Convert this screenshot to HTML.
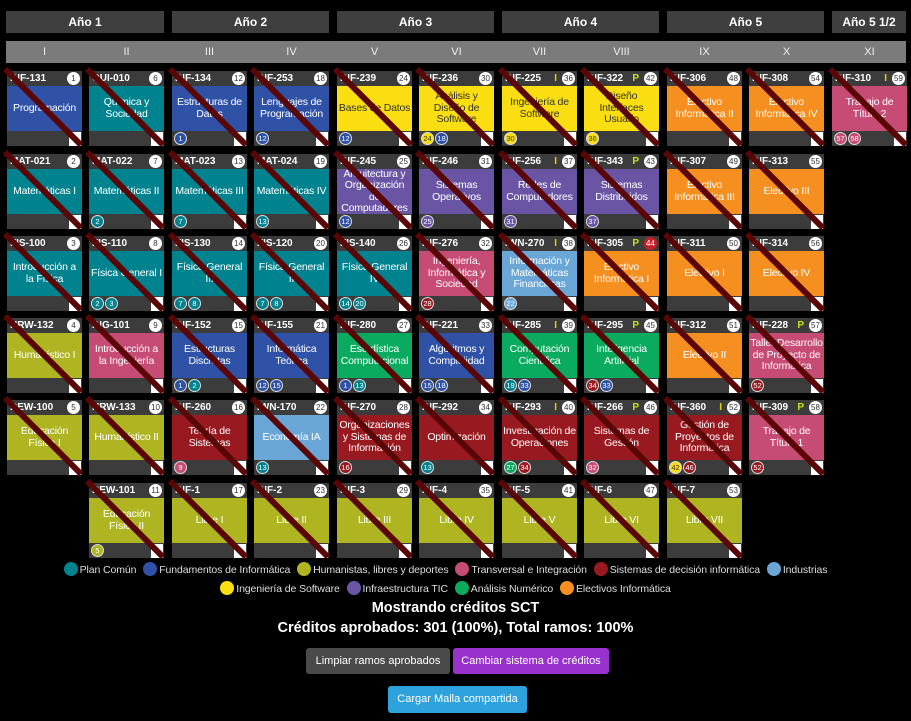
<!DOCTYPE html>
<html><head><meta charset="utf-8">
<style>
*{box-sizing:border-box;margin:0;padding:0}
body{width:911px;height:721px;background:#000;font-family:"Liberation Sans",sans-serif;color:#fff;position:relative;overflow:hidden}
.y{position:absolute;top:11px;height:22px;background:#3f3f3f;font-weight:bold;font-size:12px;line-height:22px;text-align:center}
.s{position:absolute;top:41px;height:22px;background:#7b7b7b;font-size:11px;line-height:22px;color:#eee}
.s span{position:absolute;width:75px;text-align:center}
.c{position:absolute;width:75px;height:75px;background:#3c3c3c}
.h{height:15px;font-size:10px;font-weight:bold;line-height:15px;padding-left:3px;position:relative}
.n{position:absolute;right:2px;top:1px;width:13px;height:13px;border-radius:50%;background:#fff;color:#333;font-size:8px;line-height:13px;text-align:center;font-weight:normal}
.fl{position:absolute;right:20px;top:0;font-size:10px;font-weight:bold;color:#e0d400}
.fl.p{color:#c6e31a}
.b{height:45px;display:flex;align-items:center;justify-content:center;text-align:center;font-size:10.5px;line-height:11.5px;padding:0 1px;letter-spacing:-0.2px}
.f{height:15px;position:relative;padding:1px 0 0 2px;display:flex;gap:1px}
.f b{width:13px;height:13px;border-radius:50%;border:1px solid #ddd;font-size:7.5px;line-height:11px;text-align:center;font-weight:normal}
.sq{position:absolute;right:1px;bottom:0;width:12px;height:14px;background:#fff}
.c svg{position:absolute;left:-2px;top:-2px;width:79px;height:79px;overflow:visible}
.T{background:#00838f}.B{background:#2f52a6}.O{background:#aeb520}.K{background:#c64c75}.R{background:#981a20}.L{background:#6aa6d6}.Y{background:#fade12;color:#333}.P{background:#6a55a5}.G{background:#0aab5e}.A{background:#f58f1f}
.lg{position:absolute;left:-12px;width:911px;text-align:center;font-size:10.5px;color:#ddd;letter-spacing:-0.1px}
.lg i{display:inline-block;width:14px;height:14px;border-radius:50%;vertical-align:-3px;margin:0 2px 0 4px}
.t{position:absolute;left:0;width:911px;text-align:center;font-weight:bold;font-size:14.5px}
.btn{position:absolute;height:26px;font-size:11px;line-height:26px;text-align:center;border-radius:3px}
</style></head><body>
<div class="y" style="left:6px;width:158px">Año 1</div>
<div class="y" style="left:172px;width:157px">Año 2</div>
<div class="y" style="left:337px;width:157px">Año 3</div>
<div class="y" style="left:502px;width:157px">Año 4</div>
<div class="y" style="left:667px;width:157px">Año 5</div>
<div class="y" style="left:832px;width:74px">Año 5 1/2</div>
<div class="s" style="left:6px;width:900px">
<span style="left:1px">I</span><span style="left:83px">II</span><span style="left:166px">III</span><span style="left:248px">IV</span><span style="left:331px">V</span><span style="left:413px">VI</span><span style="left:496px">VII</span><span style="left:578px">VIII</span><span style="left:661px">IX</span><span style="left:743px">X</span><span style="left:826px">XI</span></div>

<div class="c" style="left:7px;top:71px"><div class="h">INF-131<span class="n">1</span></div><div class="b B">Programación</div><div class="f"></div><i class="sq"></i><svg><line x1="0" y1="0" x2="76" y2="76" stroke="#5a0606" stroke-width="6"/></svg></div>
<div class="c" style="left:7px;top:154px"><div class="h">MAT-021<span class="n">2</span></div><div class="b T">Matemáticas I</div><div class="f"></div><i class="sq"></i><svg><line x1="0" y1="0" x2="76" y2="76" stroke="#5a0606" stroke-width="6"/></svg></div>
<div class="c" style="left:7px;top:236px"><div class="h">FIS-100<span class="n">3</span></div><div class="b T">Introducción a la Física</div><div class="f"></div><i class="sq"></i><svg><line x1="0" y1="0" x2="76" y2="76" stroke="#5a0606" stroke-width="6"/></svg></div>
<div class="c" style="left:7px;top:318px"><div class="h">HRW-132<span class="n">4</span></div><div class="b O">Humanístico I</div><div class="f"></div><i class="sq"></i><svg><line x1="0" y1="0" x2="76" y2="76" stroke="#5a0606" stroke-width="6"/></svg></div>
<div class="c" style="left:7px;top:400px"><div class="h">DEW-100<span class="n">5</span></div><div class="b O">Educación Física I</div><div class="f"></div><i class="sq"></i><svg><line x1="0" y1="0" x2="76" y2="76" stroke="#5a0606" stroke-width="6"/></svg></div>
<div class="c" style="left:89px;top:71px"><div class="h">QUI-010<span class="n">6</span></div><div class="b T">Química y Sociedad</div><div class="f"></div><i class="sq"></i><svg><line x1="0" y1="0" x2="76" y2="76" stroke="#5a0606" stroke-width="6"/></svg></div>
<div class="c" style="left:89px;top:154px"><div class="h">MAT-022<span class="n">7</span></div><div class="b T">Matemáticas II</div><div class="f"><b class="T">2</b></div><i class="sq"></i><svg><line x1="0" y1="0" x2="76" y2="76" stroke="#5a0606" stroke-width="6"/></svg></div>
<div class="c" style="left:89px;top:236px"><div class="h">FIS-110<span class="n">8</span></div><div class="b T">Física General I</div><div class="f"><b class="T">2</b><b class="T">3</b></div><i class="sq"></i><svg><line x1="0" y1="0" x2="76" y2="76" stroke="#5a0606" stroke-width="6"/></svg></div>
<div class="c" style="left:89px;top:318px"><div class="h">ING-101<span class="n">9</span></div><div class="b K">Introducción a la Ingeniería</div><div class="f"></div><i class="sq"></i><svg><line x1="0" y1="0" x2="76" y2="76" stroke="#5a0606" stroke-width="6"/></svg></div>
<div class="c" style="left:89px;top:400px"><div class="h">HRW-133<span class="n">10</span></div><div class="b O">Humanístico II</div><div class="f"></div><i class="sq"></i><svg><line x1="0" y1="0" x2="76" y2="76" stroke="#5a0606" stroke-width="6"/></svg></div>
<div class="c" style="left:89px;top:483px"><div class="h">DEW-101<span class="n">11</span></div><div class="b O">Educación Física II</div><div class="f"><b class="O">5</b></div><i class="sq"></i><svg><line x1="0" y1="0" x2="76" y2="76" stroke="#5a0606" stroke-width="6"/></svg></div>
<div class="c" style="left:172px;top:71px"><div class="h">INF-134<span class="n">12</span></div><div class="b B">Estructuras de Datos</div><div class="f"><b class="B">1</b></div><i class="sq"></i><svg><line x1="0" y1="0" x2="76" y2="76" stroke="#5a0606" stroke-width="6"/></svg></div>
<div class="c" style="left:172px;top:154px"><div class="h">MAT-023<span class="n">13</span></div><div class="b T">Matemáticas III</div><div class="f"><b class="T">7</b></div><i class="sq"></i><svg><line x1="0" y1="0" x2="76" y2="76" stroke="#5a0606" stroke-width="6"/></svg></div>
<div class="c" style="left:172px;top:236px"><div class="h">FIS-130<span class="n">14</span></div><div class="b T">Física General III</div><div class="f"><b class="T">7</b><b class="T">8</b></div><i class="sq"></i><svg><line x1="0" y1="0" x2="76" y2="76" stroke="#5a0606" stroke-width="6"/></svg></div>
<div class="c" style="left:172px;top:318px"><div class="h">INF-152<span class="n">15</span></div><div class="b B">Estructuras Discretas</div><div class="f"><b class="B">1</b><b class="T">2</b></div><i class="sq"></i><svg><line x1="0" y1="0" x2="76" y2="76" stroke="#5a0606" stroke-width="6"/></svg></div>
<div class="c" style="left:172px;top:400px"><div class="h">INF-260<span class="n">16</span></div><div class="b R">Teoría de Sistemas</div><div class="f"><b class="K">9</b></div><i class="sq"></i><svg><line x1="0" y1="0" x2="76" y2="76" stroke="#5a0606" stroke-width="6"/></svg></div>
<div class="c" style="left:172px;top:483px"><div class="h">INF-1<span class="n">17</span></div><div class="b O">Libre I</div><div class="f"></div><i class="sq"></i><svg><line x1="0" y1="0" x2="76" y2="76" stroke="#5a0606" stroke-width="6"/></svg></div>
<div class="c" style="left:254px;top:71px"><div class="h">INF-253<span class="n">18</span></div><div class="b B">Lenguajes de Programación</div><div class="f"><b class="B">12</b></div><i class="sq"></i><svg><line x1="0" y1="0" x2="76" y2="76" stroke="#5a0606" stroke-width="6"/></svg></div>
<div class="c" style="left:254px;top:154px"><div class="h">MAT-024<span class="n">19</span></div><div class="b T">Matemáticas IV</div><div class="f"><b class="T">13</b></div><i class="sq"></i><svg><line x1="0" y1="0" x2="76" y2="76" stroke="#5a0606" stroke-width="6"/></svg></div>
<div class="c" style="left:254px;top:236px"><div class="h">FIS-120<span class="n">20</span></div><div class="b T">Física General II</div><div class="f"><b class="T">7</b><b class="T">8</b></div><i class="sq"></i><svg><line x1="0" y1="0" x2="76" y2="76" stroke="#5a0606" stroke-width="6"/></svg></div>
<div class="c" style="left:254px;top:318px"><div class="h">INF-155<span class="n">21</span></div><div class="b B">Informática Teórica</div><div class="f"><b class="B">12</b><b class="B">15</b></div><i class="sq"></i><svg><line x1="0" y1="0" x2="76" y2="76" stroke="#5a0606" stroke-width="6"/></svg></div>
<div class="c" style="left:254px;top:400px"><div class="h">IWN-170<span class="n">22</span></div><div class="b L">Economía IA</div><div class="f"><b class="T">13</b></div><i class="sq"></i><svg><line x1="0" y1="0" x2="76" y2="76" stroke="#5a0606" stroke-width="6"/></svg></div>
<div class="c" style="left:254px;top:483px"><div class="h">INF-2<span class="n">23</span></div><div class="b O">Libre II</div><div class="f"></div><i class="sq"></i><svg><line x1="0" y1="0" x2="76" y2="76" stroke="#5a0606" stroke-width="6"/></svg></div>
<div class="c" style="left:337px;top:71px"><div class="h">INF-239<span class="n">24</span></div><div class="b Y">Bases de Datos</div><div class="f"><b class="B">12</b></div><i class="sq"></i><svg><line x1="0" y1="0" x2="76" y2="76" stroke="#5a0606" stroke-width="6"/></svg></div>
<div class="c" style="left:337px;top:154px"><div class="h">INF-245<span class="n">25</span></div><div class="b P">Arquitectura y Organización de Computadores</div><div class="f"><b class="B">12</b></div><i class="sq"></i><svg><line x1="0" y1="0" x2="76" y2="76" stroke="#5a0606" stroke-width="6"/></svg></div>
<div class="c" style="left:337px;top:236px"><div class="h">FIS-140<span class="n">26</span></div><div class="b T">Física General IV</div><div class="f"><b class="T">14</b><b class="T">20</b></div><i class="sq"></i><svg><line x1="0" y1="0" x2="76" y2="76" stroke="#5a0606" stroke-width="6"/></svg></div>
<div class="c" style="left:337px;top:318px"><div class="h">INF-280<span class="n">27</span></div><div class="b G">Estadística Computacional</div><div class="f"><b class="B">1</b><b class="T">13</b></div><i class="sq"></i><svg><line x1="0" y1="0" x2="76" y2="76" stroke="#5a0606" stroke-width="6"/></svg></div>
<div class="c" style="left:337px;top:400px"><div class="h">INF-270<span class="n">28</span></div><div class="b R">Organizaciones y Sistemas de Información</div><div class="f"><b class="R">16</b></div><i class="sq"></i><svg><line x1="0" y1="0" x2="76" y2="76" stroke="#5a0606" stroke-width="6"/></svg></div>
<div class="c" style="left:337px;top:483px"><div class="h">INF-3<span class="n">29</span></div><div class="b O">Libre III</div><div class="f"></div><i class="sq"></i><svg><line x1="0" y1="0" x2="76" y2="76" stroke="#5a0606" stroke-width="6"/></svg></div>
<div class="c" style="left:419px;top:71px"><div class="h">INF-236<span class="n">30</span></div><div class="b Y">Análisis y Diseño de Software</div><div class="f"><b class="Y">24</b><b class="B">18</b></div><i class="sq"></i><svg><line x1="0" y1="0" x2="76" y2="76" stroke="#5a0606" stroke-width="6"/></svg></div>
<div class="c" style="left:419px;top:154px"><div class="h">INF-246<span class="n">31</span></div><div class="b P">Sistemas Operativos</div><div class="f"><b class="P">25</b></div><i class="sq"></i><svg><line x1="0" y1="0" x2="76" y2="76" stroke="#5a0606" stroke-width="6"/></svg></div>
<div class="c" style="left:419px;top:236px"><div class="h">INF-276<span class="n">32</span></div><div class="b K">Ingeniería, Informática y Sociedad</div><div class="f"><b class="R">28</b></div><i class="sq"></i><svg><line x1="0" y1="0" x2="76" y2="76" stroke="#5a0606" stroke-width="6"/></svg></div>
<div class="c" style="left:419px;top:318px"><div class="h">INF-221<span class="n">33</span></div><div class="b B">Algoritmos y Complejidad</div><div class="f"><b class="B">15</b><b class="B">18</b></div><i class="sq"></i><svg><line x1="0" y1="0" x2="76" y2="76" stroke="#5a0606" stroke-width="6"/></svg></div>
<div class="c" style="left:419px;top:400px"><div class="h">INF-292<span class="n">34</span></div><div class="b R">Optimización</div><div class="f"><b class="T">13</b></div><i class="sq"></i><svg><line x1="0" y1="0" x2="76" y2="76" stroke="#5a0606" stroke-width="6"/></svg></div>
<div class="c" style="left:419px;top:483px"><div class="h">INF-4<span class="n">35</span></div><div class="b O">Libre IV</div><div class="f"></div><i class="sq"></i><svg><line x1="0" y1="0" x2="76" y2="76" stroke="#5a0606" stroke-width="6"/></svg></div>
<div class="c" style="left:502px;top:71px"><div class="h">INF-225<span class="fl">I</span><span class="n">36</span></div><div class="b Y">Ingeniería de Software</div><div class="f"><b class="Y">30</b></div><i class="sq"></i><svg><line x1="0" y1="0" x2="76" y2="76" stroke="#5a0606" stroke-width="6"/></svg></div>
<div class="c" style="left:502px;top:154px"><div class="h">INF-256<span class="fl">I</span><span class="n">37</span></div><div class="b P">Redes de Computadores</div><div class="f"><b class="P">31</b></div><i class="sq"></i><svg><line x1="0" y1="0" x2="76" y2="76" stroke="#5a0606" stroke-width="6"/></svg></div>
<div class="c" style="left:502px;top:236px"><div class="h">IWN-270<span class="fl">I</span><span class="n">38</span></div><div class="b L">Información y Matemáticas Financieras</div><div class="f"><b class="L">22</b></div><i class="sq"></i><svg><line x1="0" y1="0" x2="76" y2="76" stroke="#5a0606" stroke-width="6"/></svg></div>
<div class="c" style="left:502px;top:318px"><div class="h">INF-285<span class="fl">I</span><span class="n">39</span></div><div class="b G">Computación Científica</div><div class="f"><b class="T">19</b><b class="B">33</b></div><i class="sq"></i><svg><line x1="0" y1="0" x2="76" y2="76" stroke="#5a0606" stroke-width="6"/></svg></div>
<div class="c" style="left:502px;top:400px"><div class="h">INF-293<span class="fl">I</span><span class="n">40</span></div><div class="b R">Investigación de Operaciones</div><div class="f"><b class="G">27</b><b class="R">34</b></div><i class="sq"></i><svg><line x1="0" y1="0" x2="76" y2="76" stroke="#5a0606" stroke-width="6"/></svg></div>
<div class="c" style="left:502px;top:483px"><div class="h">INF-5<span class="n">41</span></div><div class="b O">Libre V</div><div class="f"></div><i class="sq"></i><svg><line x1="0" y1="0" x2="76" y2="76" stroke="#5a0606" stroke-width="6"/></svg></div>
<div class="c" style="left:584px;top:71px"><div class="h">INF-322<span class="fl p">P</span><span class="n">42</span></div><div class="b Y">Diseño Interfaces Usuario</div><div class="f"><b class="Y">36</b></div><i class="sq"></i><svg><line x1="0" y1="0" x2="76" y2="76" stroke="#5a0606" stroke-width="6"/></svg></div>
<div class="c" style="left:584px;top:154px"><div class="h">INF-343<span class="fl p">P</span><span class="n">43</span></div><div class="b P">Sistemas Distribuidos</div><div class="f"><b class="P">37</b></div><i class="sq"></i><svg><line x1="0" y1="0" x2="76" y2="76" stroke="#5a0606" stroke-width="6"/></svg></div>
<div class="c" style="left:584px;top:236px"><div class="h">INF-305<span class="fl p">P</span><span class="n" style="background:#c4202a;color:#fff">44</span></div><div class="b A">Electivo Informática I</div><div class="f"></div><i class="sq"></i><svg><line x1="0" y1="0" x2="76" y2="76" stroke="#5a0606" stroke-width="6"/></svg></div>
<div class="c" style="left:584px;top:318px"><div class="h">INF-295<span class="fl p">P</span><span class="n">45</span></div><div class="b G">Inteligencia Artificial</div><div class="f"><b class="R">34</b><b class="B">33</b></div><i class="sq"></i><svg><line x1="0" y1="0" x2="76" y2="76" stroke="#5a0606" stroke-width="6"/></svg></div>
<div class="c" style="left:584px;top:400px"><div class="h">INF-266<span class="fl p">P</span><span class="n">46</span></div><div class="b R">Sistemas de Gestión</div><div class="f"><b class="K">32</b></div><i class="sq"></i><svg><line x1="0" y1="0" x2="76" y2="76" stroke="#5a0606" stroke-width="6"/></svg></div>
<div class="c" style="left:584px;top:483px"><div class="h">INF-6<span class="n">47</span></div><div class="b O">Libre VI</div><div class="f"></div><i class="sq"></i><svg><line x1="0" y1="0" x2="76" y2="76" stroke="#5a0606" stroke-width="6"/></svg></div>
<div class="c" style="left:667px;top:71px"><div class="h">INF-306<span class="n">48</span></div><div class="b A">Electivo Informática II</div><div class="f"></div><i class="sq"></i><svg><line x1="0" y1="0" x2="76" y2="76" stroke="#5a0606" stroke-width="6"/></svg></div>
<div class="c" style="left:667px;top:154px"><div class="h">INF-307<span class="n">49</span></div><div class="b A">Electivo Informática III</div><div class="f"></div><i class="sq"></i><svg><line x1="0" y1="0" x2="76" y2="76" stroke="#5a0606" stroke-width="6"/></svg></div>
<div class="c" style="left:667px;top:236px"><div class="h">INF-311<span class="n">50</span></div><div class="b A">Electivo I</div><div class="f"></div><i class="sq"></i><svg><line x1="0" y1="0" x2="76" y2="76" stroke="#5a0606" stroke-width="6"/></svg></div>
<div class="c" style="left:667px;top:318px"><div class="h">INF-312<span class="n">51</span></div><div class="b A">Electivo II</div><div class="f"></div><i class="sq"></i><svg><line x1="0" y1="0" x2="76" y2="76" stroke="#5a0606" stroke-width="6"/></svg></div>
<div class="c" style="left:667px;top:400px"><div class="h">INF-360<span class="fl">I</span><span class="n">52</span></div><div class="b R">Gestión de Proyectos de Informática</div><div class="f"><b class="Y">42</b><b class="R">46</b></div><i class="sq"></i><svg><line x1="0" y1="0" x2="76" y2="76" stroke="#5a0606" stroke-width="6"/></svg></div>
<div class="c" style="left:667px;top:483px"><div class="h">INF-7<span class="n">53</span></div><div class="b O">Libre VII</div><div class="f"></div><i class="sq"></i><svg><line x1="0" y1="0" x2="76" y2="76" stroke="#5a0606" stroke-width="6"/></svg></div>
<div class="c" style="left:749px;top:71px"><div class="h">INF-308<span class="n">54</span></div><div class="b A">Electivo Informática IV</div><div class="f"></div><i class="sq"></i><svg><line x1="0" y1="0" x2="76" y2="76" stroke="#5a0606" stroke-width="6"/></svg></div>
<div class="c" style="left:749px;top:154px"><div class="h">INF-313<span class="n">55</span></div><div class="b A">Electivo III</div><div class="f"></div><i class="sq"></i><svg><line x1="0" y1="0" x2="76" y2="76" stroke="#5a0606" stroke-width="6"/></svg></div>
<div class="c" style="left:749px;top:236px"><div class="h">INF-314<span class="n">56</span></div><div class="b A">Electivo IV</div><div class="f"></div><i class="sq"></i><svg><line x1="0" y1="0" x2="76" y2="76" stroke="#5a0606" stroke-width="6"/></svg></div>
<div class="c" style="left:749px;top:318px"><div class="h">INF-228<span class="fl p">P</span><span class="n">57</span></div><div class="b K">Taller Desarrollo de Proyecto de Informática</div><div class="f"><b class="R">52</b></div><i class="sq"></i><svg><line x1="0" y1="0" x2="76" y2="76" stroke="#5a0606" stroke-width="6"/></svg></div>
<div class="c" style="left:749px;top:400px"><div class="h">INF-309<span class="fl p">P</span><span class="n">58</span></div><div class="b K">Trabajo de Título 1</div><div class="f"><b class="R">52</b></div><i class="sq"></i><svg><line x1="0" y1="0" x2="76" y2="76" stroke="#5a0606" stroke-width="6"/></svg></div>
<div class="c" style="left:832px;top:71px"><div class="h">INF-310<span class="fl">I</span><span class="n">59</span></div><div class="b K">Trabajo de Título 2</div><div class="f"><b class="K">57</b><b class="K">58</b></div><i class="sq"></i><svg><line x1="0" y1="0" x2="76" y2="76" stroke="#5a0606" stroke-width="6"/></svg></div>

<div class="lg" style="top:562px"><i class="T"></i>Plan Común <i class="B"></i>Fundamentos de Informática <i class="O"></i>Humanistas, libres y deportes <i class="K"></i>Transversal e Integración <i class="R"></i>Sistemas de decisión informática <i class="L"></i>Industrias</div>
<div class="lg" style="top:581px"><i class="Y"></i>Ingeniería de Software <i class="P"></i>Infraestructura TIC <i class="G"></i>Análisis Numérico <i class="A"></i>Electivos Informática</div>
<div class="t" style="top:600px">Mostrando créditos SCT</div>
<div class="t" style="top:620px">Créditos aprobados: 301 (100%), Total ramos: 100%</div>
<div class="btn" style="left:306px;top:648px;width:144px;background:#4a4a4a">Limpiar ramos aprobados</div>
<div class="btn" style="left:453px;top:648px;width:156px;background:#9932cc">Cambiar sistema de créditos</div>
<div class="btn" style="left:388px;top:686px;width:139px;height:27px;background:#2ea2dc">Cargar Malla compartida</div>
</body></html>
